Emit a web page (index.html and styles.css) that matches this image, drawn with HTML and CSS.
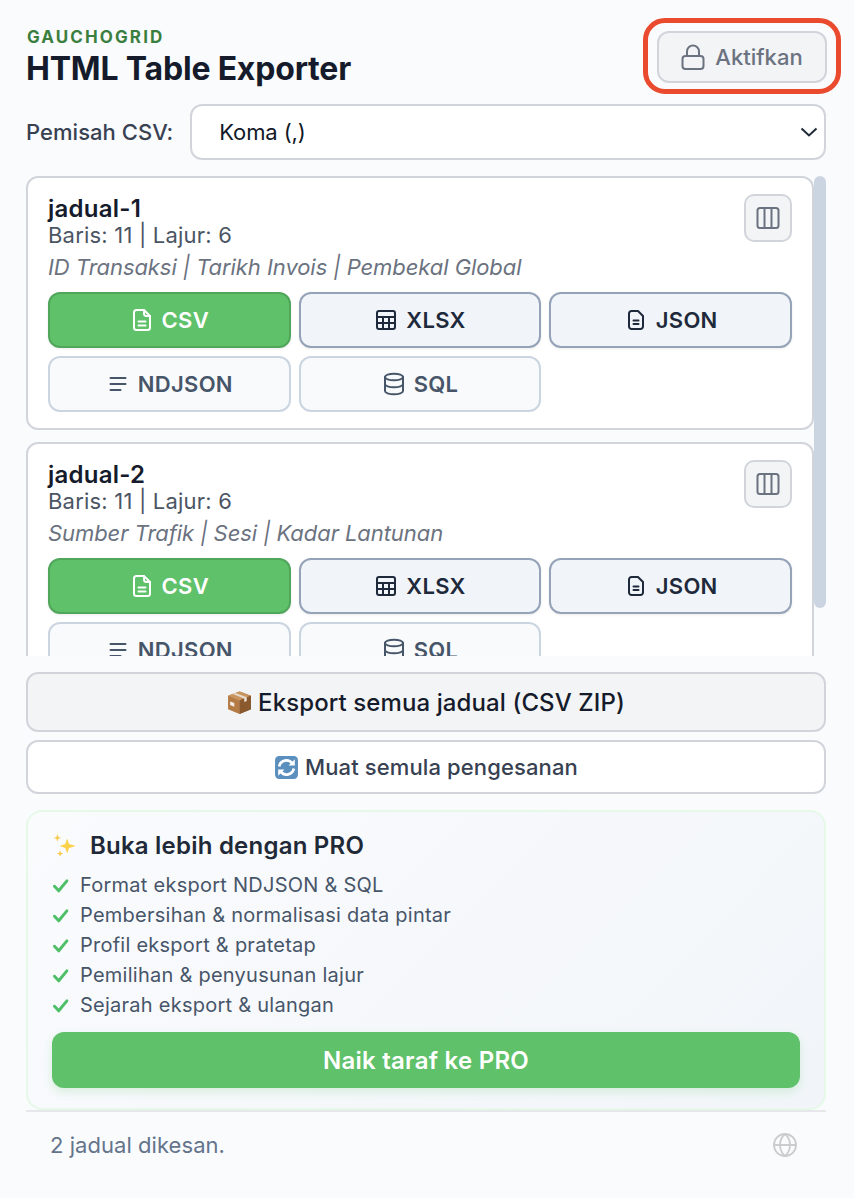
FILE: index.html
```html
<!DOCTYPE html>
<html lang="ms">
<head>
  <meta charset="UTF-8">
  <meta name="viewport" content="width=device-width, initial-scale=1.0">
  <title>HTML Table Exporter</title>
  <link rel="stylesheet" href="styles.css">
</head>
<body>
  <svg class="icon-defs" aria-hidden="true">
    <symbol id="i-file-text" viewBox="0 0 24 24"><path d="M14 2H6.500A2.500 2.500 0 0 0 4 4.500v15A2.500 2.500 0 0 0 6.500 22h11a2.500 2.500 0 0 0 2.500-2.500V8z"/><path d="M14 2v3.500A2.500 2.500 0 0 0 16.500 8H20"/><path d="M8.500 13.500h7"/><path d="M8.500 17.500h7"/></symbol>
    <symbol id="i-table" viewBox="0 0 24 24"><rect x="3" y="3" width="18" height="18" rx="2"/><path d="M3 9h18"/><path d="M3 15h18"/><path d="M9 9v12"/><path d="M15 9v12"/></symbol>
    <symbol id="i-file" viewBox="0 0 24 24"><path d="M14 3H7.500A2.500 2.500 0 0 0 5 5.500v13A2.500 2.500 0 0 0 7.500 21h9a2.500 2.500 0 0 0 2.500-2.500V8z"/><path d="M9.500 12.500h5"/><path d="M9.500 16h5"/></symbol>
    <symbol id="i-lines" viewBox="0 0 24 24"><path d="M4.500 6h15"/><path d="M4.500 12h15"/><path d="M4.500 18h10"/></symbol>
    <symbol id="i-db" viewBox="0 0 24 24"><ellipse cx="12" cy="5" rx="9" ry="3.300"/><path d="M3 5v14c0 1.800 4 3.300 9 3.300s9-1.500 9-3.300V5"/><path d="M3 12c0 1.800 4 3.300 9 3.300s9-1.500 9-3.300"/></symbol>
    <symbol id="i-check" viewBox="0 0 24 24"><path d="M3.500 13l6 6.500L21 5.500"/></symbol>
  </svg>

  <div class="popup">
    <header class="top">
      <div>
        <div class="brand">GAUCHOGRID</div>
        <h1>HTML Table Exporter</h1>
      </div>
      <div class="activate-wrap">
        <button class="activate">
          <svg class="icon lock" viewBox="0 0 24 24"><rect x="1.500" y="11" width="21" height="13" rx="3"/><path d="M6 11V6.500a6 6 0 0 1 12 0V11"/></svg>
          Aktifkan
        </button>
      </div>
    </header>

    <div class="delimiter">
      <label for="delim">Pemisah CSV:</label>
      <div class="select">
        <span>Koma (,)</span>
        <svg class="chevron" viewBox="0 0 18 10"><path d="M1.500 1.500L9 8.500l7.500-7"/></svg>
      </div>
    </div>

    <div class="tables-wrap">
      <div class="tables">
        <div class="card">
          <div class="card-head">
            <div>
              <div class="card-title">jadual-1</div>
              <div class="card-meta">Baris: 11 | Lajur: 6</div>
            </div>
            <button class="col-btn">
              <svg class="icon" viewBox="0 0 24 24"><rect x="1.500" y="2" width="21" height="20" rx="2.500"/><path d="M8.500 2v20"/><path d="M15.500 2v20"/></svg>
            </button>
          </div>
          <div class="card-cols">ID Transaksi | Tarikh Invois | Pembekal Global</div>
          <div class="formats">
            <button class="fmt primary"><svg class="icon"><use href="#i-file-text"/></svg>CSV</button>
            <button class="fmt"><svg class="icon"><use href="#i-table"/></svg>XLSX</button>
            <button class="fmt"><svg class="icon"><use href="#i-file"/></svg>JSON</button>
            <button class="fmt locked"><svg class="icon"><use href="#i-lines"/></svg>NDJSON</button>
            <button class="fmt locked"><svg class="icon"><use href="#i-db"/></svg>SQL</button>
          </div>
        </div>

        <div class="card">
          <div class="card-head">
            <div>
              <div class="card-title">jadual-2</div>
              <div class="card-meta">Baris: 11 | Lajur: 6</div>
            </div>
            <button class="col-btn">
              <svg class="icon" viewBox="0 0 24 24"><rect x="1.500" y="2" width="21" height="20" rx="2.500"/><path d="M8.500 2v20"/><path d="M15.500 2v20"/></svg>
            </button>
          </div>
          <div class="card-cols">Sumber Trafik | Sesi | Kadar Lantunan</div>
          <div class="formats">
            <button class="fmt primary"><svg class="icon"><use href="#i-file-text"/></svg>CSV</button>
            <button class="fmt"><svg class="icon"><use href="#i-table"/></svg>XLSX</button>
            <button class="fmt"><svg class="icon"><use href="#i-file"/></svg>JSON</button>
            <button class="fmt locked"><svg class="icon"><use href="#i-lines"/></svg>NDJSON</button>
            <button class="fmt locked"><svg class="icon"><use href="#i-db"/></svg>SQL</button>
          </div>
        </div>
      </div>
      <div class="scroll-thumb"></div>
    </div>

    <button class="export-all">
      <svg class="emoji" viewBox="0 0 24 24">
        <path d="M12 1.500L23 5.500v13L12 23z" fill="#7a4a22"/>
        <path d="M12 1.500L1 5.500v13L12 23z" fill="#b57b45"/>
        <path d="M1 5.500L12 1.500l11 4L12 10z" fill="#c99660"/>
        <path d="M12 10L23 5.500v13L12 23z" fill="#8a5a2e"/>
        <path d="M5.500 3.900l11 4.200 0 3.400 2.500-1V7l-11-4.200z" fill="#e6dccf"/>
        <path d="M3 11l4 1.500v3.500L3 14.500z" fill="#f2ece4"/>
      </svg>
      Eksport semua jadual (CSV ZIP)
    </button>
    <button class="reload">
      <svg class="emoji" viewBox="0 0 24 24">
        <rect x="1" y="1" width="22" height="22" rx="4" fill="#5b8fbd"/>
        <path d="M5 11a7 7 0 0 1 12.500-3" fill="none" stroke="#fff" stroke-width="2.600"/>
        <path d="M19 13a7 7 0 0 1-12.500 3" fill="none" stroke="#fff" stroke-width="2.600"/>
        <path d="M20 4v6h-6z" fill="#fff"/>
        <path d="M4 20v-6h6z" fill="#fff"/>
      </svg>
      Muat semula pengesanan
    </button>

    <section class="pro">
      <h2>
        <svg class="sparkles" viewBox="0 0 24 24">
          <path d="M14 5l1.800 5.200L22 12l-6.200 1.800L14 19l-1.800-5.200L7 12l5.200-1.800z" fill="#fbd24c"/>
          <path d="M5 1l.9 2.600L8.500 4.500l-2.600.9L5 8l-.9-2.600L1.500 4.500l2.600-.9z" fill="#fbc94a"/>
          <path d="M7.500 16l.8 2.200 2.200.8-2.200.8-.8 2.200-.8-2.200-2.200-.8 2.200-.8z" fill="#fbc94a"/>
        </svg>
        Buka lebih dengan PRO
      </h2>
      <ul>
        <li><svg class="icon check"><use href="#i-check"/></svg>Format eksport NDJSON &amp; SQL</li>
        <li><svg class="icon check"><use href="#i-check"/></svg>Pembersihan &amp; normalisasi data pintar</li>
        <li><svg class="icon check"><use href="#i-check"/></svg>Profil eksport &amp; pratetap</li>
        <li><svg class="icon check"><use href="#i-check"/></svg>Pemilihan &amp; penyusunan lajur</li>
        <li><svg class="icon check"><use href="#i-check"/></svg>Sejarah eksport &amp; ulangan</li>
      </ul>
      <button class="upgrade">Naik taraf ke PRO</button>
    </section>

    <footer class="status">
      <span>2 jadual dikesan.</span>
      <svg class="icon globe" viewBox="0 0 24 24"><circle cx="12" cy="12" r="11"/><path d="M1 12h22"/><path d="M12 1c3.500 3 5 6.800 5 11s-1.500 8-5 11c-3.500-3-5-6.800-5-11s1.500-8 5-11z"/></svg>
    </footer>
  </div>
</body>
</html>
```

FILE: styles.css
```css
* {
  box-sizing: border-box;
}
body {
  margin: 0;
  background-color: #fafbfd;
  font-family: Inter, "Liberation Sans", sans-serif;
  color: #111827;
}
button {
  font-family: inherit;
  cursor: pointer;
}
.icon-defs {
  display: none;
}
.icon {
  fill: none;
  stroke: currentColor;
  stroke-width: 2;
  stroke-linecap: round;
  stroke-linejoin: round;
}
.popup {
  width: 854px;
  padding: 18px 28px 0 26px;
}

.top {
  display: flex;
  justify-content: space-between;
  align-items: flex-start;
  height: 86px;
}
.brand {
  margin-top: 9px;
  margin-left: 1px;
  font-size: 17px;
  line-height: 20px;
  font-weight: 700;
  letter-spacing: 2.100px;
  color: #3b7f3f;
}
h1 {
  margin: 2px 0 0;
  font-size: 32px;
  line-height: 40px;
  font-weight: 700;
  letter-spacing: -0.200px;
  color: #151b2b;
}
.activate-wrap {
  margin-right: -15px;
  padding: 8px 9px 6px;
  border: 5px solid #ea4a2d;
  border-radius: 22px;
}
.activate {
  display: flex;
  align-items: center;
  justify-content: center;
  gap: 10px;
  width: 170px;
  height: 52px;
  background-color: #f3f4f6;
  border: 2px solid #d1d5db;
  border-radius: 12px;
  font-size: 22px;
  font-weight: 500;
  color: #6b7280;
}
.lock {
  width: 24px;
  height: 26px;
}

.delimiter {
  display: flex;
  align-items: center;
  gap: 17px;
  margin-bottom: 16px;
}
.delimiter label {
  font-size: 22px;
  font-weight: 500;
  letter-spacing: 0.050px;
  color: #374151;
}
.select {
  flex: 1;
  display: flex;
  justify-content: space-between;
  align-items: center;
  height: 56px;
  padding: 0 6px 0 27px;
  background-color: #fff;
  border: 2px solid #d1d5db;
  border-radius: 12px;
  font-size: 22px;
  letter-spacing: -0.100px;
  color: #111827;
}
.chevron {
  width: 18px;
  height: 10px;
  fill: none;
  stroke: #1f2937;
  stroke-width: 2;
}

.tables-wrap {
  position: relative;
  margin-bottom: 16px;
}
.tables {
  height: 480px;
  overflow: hidden;
  padding-right: 12px;
}
.scroll-thumb {
  position: absolute;
  top: 0;
  right: 0;
  width: 12px;
  height: 432px;
  background-color: #cbd5e1;
  border-radius: 6px;
}
.card {
  height: 254px;
  margin-bottom: 12px;
  padding: 17px 20px 16px;
  background-color: #fff;
  border: 2px solid #d1d5db;
  border-radius: 12px;
}
.card-head {
  display: flex;
  justify-content: space-between;
  align-items: flex-start;
  height: 56px;
}
.card-title {
  font-size: 24px;
  line-height: 27px;
  font-weight: 600;
  letter-spacing: 0.250px;
  color: #151b2b;
}
.card-meta {
  font-size: 22px;
  line-height: 26px;
  letter-spacing: 0.200px;
  color: #4b5563;
}
.col-btn {
  display: flex;
  align-items: center;
  justify-content: center;
  width: 48px;
  height: 48px;
  margin-top: -1px;
  padding: 0;
  background-color: #f3f4f6;
  border: 2px solid #d1d5db;
  border-radius: 10px;
  color: #6b7280;
}
.col-btn .icon {
  width: 24px;
  height: 24px;
}
.card-cols {
  margin-top: 3px;
  font-size: 22px;
  line-height: 26px;
  font-style: italic;
  letter-spacing: -0.070px;
  color: #6b7280;
}
.formats {
  display: grid;
  grid-template-columns: repeat(3, 1fr);
  gap: 8px;
  margin-top: 12px;
}
.fmt {
  display: flex;
  align-items: center;
  justify-content: center;
  gap: 8px;
  height: 56px;
  padding: 0;
  background-color: #f1f5f9;
  border: 2px solid #94a3b8;
  border-radius: 12px;
  font-size: 22px;
  font-weight: 600;
  letter-spacing: 0.300px;
  color: #1e293b;
  box-shadow: 0 1px 3px rgba(0, 0, 0, 0.08);
}
.fmt .icon {
  width: 24px;
  height: 24px;
}
.fmt.primary {
  background-color: #5fc16a;
  border-color: #50a65a;
  color: #fff;
}
.fmt.locked {
  background-color: #f8fafc;
  border-color: #cbd5e1;
  color: #475569;
  box-shadow: none;
}

.export-all,
.reload {
  display: flex;
  align-items: center;
  justify-content: center;
  gap: 6px;
  width: 100%;
  padding: 0;
  border: 2px solid #d1d5db;
  border-radius: 12px;
}
.export-all {
  height: 60px;
  margin-bottom: 8px;
  background-color: #f3f4f6;
  font-size: 24px;
  font-weight: 500;
  letter-spacing: 0.100px;
  color: #151b2b;
}
.reload {
  height: 54px;
  margin-bottom: 16px;
  background-color: #fff;
  font-size: 22px;
  font-weight: 500;
  letter-spacing: 0.120px;
  color: #374151;
}
.emoji {
  width: 25px;
  height: 25px;
}

.pro {
  height: 300px;
  padding: 20px 24px 0;
  background: linear-gradient(135deg, #fafbfd, #f1f5f9);
  border: 2px solid #e6f9e8;
  border-radius: 16px;
}
.pro h2 {
  display: flex;
  align-items: center;
  gap: 12px;
  margin: 0 0 10px;
  font-size: 24px;
  line-height: 28px;
  font-weight: 600;
  letter-spacing: 0.220px;
  color: #1f2937;
}
.sparkles {
  width: 26px;
  height: 26px;
}
.pro ul {
  margin: 0;
  padding: 0;
  list-style: none;
}
.pro li {
  display: flex;
  align-items: center;
  gap: 11px;
  height: 30px;
  font-size: 20px;
  letter-spacing: 0.250px;
  color: #475569;
}
.check {
  width: 17px;
  height: 17px;
  stroke: #4fbf67;
  stroke-width: 4.200;
}
.upgrade {
  display: block;
  width: 100%;
  height: 56px;
  margin-top: 12px;
  background-color: #5fc16a;
  border: none;
  border-radius: 12px;
  font-size: 24px;
  font-weight: 600;
  letter-spacing: 0.250px;
  color: #fff;
  box-shadow: 0 4px 10px rgba(95, 193, 106, 0.2);
}

.status {
  display: flex;
  justify-content: space-between;
  align-items: center;
  height: 70px;
  padding: 0 29px 2px 24px;
  border-top: 2px solid #e5e7eb;
  font-size: 22px;
  letter-spacing: 0.050px;
  color: #64748b;
}
.globe {
  width: 24px;
  height: 24px;
  stroke: #cccccc;
  stroke-width: 1.800;
}
```
